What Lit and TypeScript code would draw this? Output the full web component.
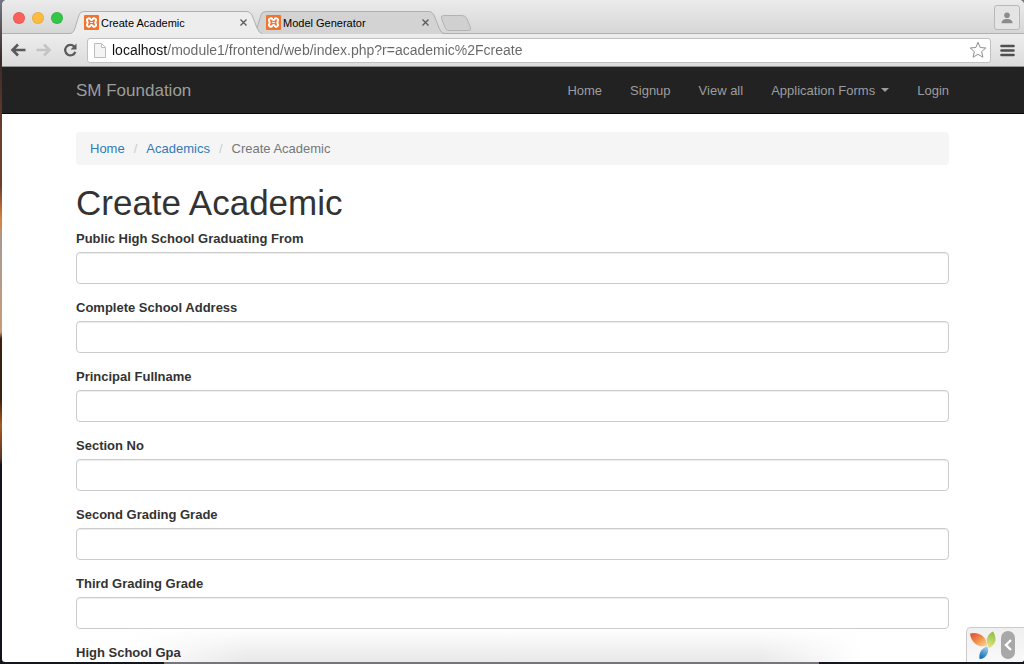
import { LitElement, html, css, svg } from "lit";
import { customElement, property } from "lit/decorators.js";

@customElement("browser-tab")
class BrowserTab extends LitElement {
  @property() label = "";
  @property({ type: Boolean, reflect: true }) active = false;

  static styles = css`
    :host {
      display: flex;
      position: relative;
      flex: 0 1 192px;
      min-width: 0;
      height: 23px;
      margin-right: -10px;
      font-family: "Liberation Sans", Arial, sans-serif;
    }
    :host([active]) {
      z-index: 1;
    }
    .shape {
      position: absolute;
      inset: 0;
      width: 100%;
      height: 100%;
    }
    .content {
      position: relative;
      display: flex;
      align-items: center;
      flex: 1;
      min-width: 0;
      padding: 0 13px 0 14px;
      gap: 2px;
    }
    .icon {
      flex: none;
      width: 15px;
      height: 15px;
    }
    button {
      border: 0;
      padding: 0;
      background: none;
      font: inherit;
    }
    .title {
      flex: 1;
      min-width: 0;
      font-size: 11px;
      line-height: 16px;
      text-align: left;
      color: #000;
      overflow: hidden;
      white-space: nowrap;
    }
    .close {
      display: flex;
      padding: 2px;
    }
    .close svg {
      width: 7px;
      height: 7px;
    }
  `;

  render() {
    const fill = this.active ? "#ededed" : "#d3d3d3";
    return html`
      <svg class="shape" viewBox="0 0 192 23" preserveAspectRatio="none" aria-hidden="true">
        <path d="M0 23 C3 22 4 20 5 17 L9 4 Q10 .5 14 .5 H177 Q180 .5 182 4 L187 17 Q189 22 192 23 Z" fill=${fill} />
        <path d="M0 22.5 C3 22 4 20 5 17 L9 4 Q10 .5 14 .5 H177 Q180 .5 182 4 L187 17 Q189 22 192 22.5" fill="none" stroke="#b0b0b0" />
      </svg>
      <div class="content">
        <svg class="icon" viewBox="0 0 15 15" aria-hidden="true">
          <rect width="15" height="15" rx="1" fill="#ee7430" />
          <path
            d="M4 3.5 Q5.5 2.5 6.4 4.4 Q7.5 5.5 8.6 4.4 Q9.5 2.5 11 3.5 Q12.8 4.5 11.6 6.4 Q11 7.5 11.6 8.6 Q12.8 10.5 11 11.5 Q9.5 12.5 8.6 10.6 Q7.5 9.5 6.4 10.6 Q5.5 12.5 4 11.5 Q2.2 10.5 3.4 8.6 Q4 7.5 3.4 6.4 Q2.2 4.5 4 3.5Z"
            fill="none"
            stroke="#fff"
            stroke-width="2"
          />
          <path d="M6.2 7.5 H8.8" stroke="#fff" stroke-width="1.2" />
        </svg>
        <button class="title" role="tab" aria-selected=${this.active}>${this.label}</button>
        <button class="close" aria-label="Close tab">
          <svg viewBox="0 0 7 7"><path d="M.5 .5 L6.5 6.5 M6.5 .5 L.5 6.5" stroke="#5c5c5c" stroke-width="1.4" /></svg>
        </button>
      </div>
    `;
  }
}

@customElement("browser-chrome")
class BrowserChrome extends LitElement {
  static styles = css`
    :host {
      display: block;
      font-family: "Liberation Sans", Arial, sans-serif;
    }
    button {
      border: 0;
      padding: 0;
      background: none;
      display: flex;
    }
    .strip {
      display: flex;
      align-items: flex-end;
      box-sizing: border-box;
      height: 34px;
      padding: 0 4px 0 11px;
      border-bottom: 1px solid #b0b0b0;
      background: linear-gradient(#ebebeb, #d6d6d6);
    }
    .lights {
      display: flex;
      align-self: flex-start;
      gap: 7px;
      padding: 12px 7px 0 0;
    }
    .light {
      box-sizing: border-box;
      width: 12px;
      height: 12px;
      border: 1px solid rgba(0, 0, 0, 0.08);
      border-radius: 50%;
    }
    .red {
      background: #fc605b;
    }
    .yellow {
      background: #fdbc40;
    }
    .green {
      background: #33c748;
    }
    .tabs {
      display: flex;
      flex: 1;
      min-width: 0;
      margin-bottom: -1px;
    }
    .new-tab {
      align-self: center;
      margin-left: 6px;
    }
    .new-tab svg {
      width: 32px;
      height: 16px;
    }
    .profile {
      align-self: flex-start;
      justify-content: center;
      align-items: center;
      box-sizing: border-box;
      width: 26px;
      height: 25px;
      margin-top: 5px;
      border: 1px solid #b8b8b8;
      border-radius: 3px;
      background: #e4e4e4;
    }
    .profile svg {
      width: 12px;
      height: 12px;
    }
    .toolbar {
      display: flex;
      align-items: center;
      box-sizing: border-box;
      height: 33px;
      padding: 0 9px 0 8px;
      border-bottom: 1px solid #8f9491;
      background: linear-gradient(#ededed, #dcdcdc);
    }
    .nav {
      display: flex;
      gap: 10px;
      padding-right: 9px;
    }
    .nav svg {
      width: 16px;
      height: 16px;
    }
    .address {
      display: flex;
      align-items: center;
      flex: 1;
      min-width: 0;
      box-sizing: border-box;
      height: 25px;
      padding: 0 3px 0 6px;
      gap: 6px;
      border: 1px solid #c0c0c0;
      border-radius: 3px;
      background: #fff;
    }
    .address svg {
      flex: none;
    }
    .url {
      flex: 1;
      min-width: 0;
      border: 0;
      padding: 0;
      outline: 0;
      font: 14px/18px "Liberation Sans", Arial, sans-serif;
      color: transparent;
      background: linear-gradient(90deg, #111 55px, #666 55px);
      -webkit-background-clip: text;
      background-clip: text;
    }
    .menu {
      margin-left: 9px;
    }
  `;

  render() {
    return html`
      <div class="strip">
        <div class="lights">
          <button class="light red" aria-label="Close window"></button>
          <button class="light yellow" aria-label="Minimize window"></button>
          <button class="light green" aria-label="Zoom window"></button>
        </div>
        <div class="tabs" role="tablist">
          <browser-tab label="Create Academic" active></browser-tab>
          <browser-tab label="Model Generator"></browser-tab>
          <button class="new-tab" aria-label="New tab">
            <svg viewBox="0 0 32 16">
              <path d="M3.5 .5 H22 Q25 .5 26.5 3 L30.5 12.5 Q31.5 15.5 28.5 15.5 H9 Q6.5 15.5 5.5 13.5 L1.5 3.5 Q.5 .5 3.5 .5Z" fill="#d0d0d0" stroke="#b2b2b2" />
            </svg>
          </button>
        </div>
        <button class="profile" aria-label="Profile">
          <svg viewBox="0 0 12 12" fill="#8c8c8c">
            <circle cx="6" cy="3.2" r="2.8" />
            <path d="M.5 11.2 C.5 8.2 3 7 6 7 S11.5 8.2 11.5 11.2Z" />
          </svg>
        </button>
      </div>
      <div class="toolbar">
        <div class="nav">
          <button aria-label="Back">
            <svg viewBox="0 0 16 16" fill="none" stroke="#5a5a5a" stroke-width="2.6"><path d="M15.5 8 H3 M8 2.5 L2.5 8 L8 13.5" /></svg>
          </button>
          <button aria-label="Forward">
            <svg viewBox="0 0 16 16" fill="none" stroke="#c4c4c4" stroke-width="2.6"><path d="M.5 8 H13 M8 2.5 L13.5 8 L8 13.5" /></svg>
          </button>
          <button aria-label="Reload">
            <svg viewBox="0 0 16 16"><path d="M12.3 4.7 A5.2 5.2 0 1 0 13.3 9.8" fill="none" stroke="#5a5a5a" stroke-width="2.3" /><path d="M14.5 1.5 V7.5 H8.5Z" fill="#5a5a5a" /></svg>
          </button>
        </div>
        <div class="address">
          <svg width="12" height="15" viewBox="0 0 12 15"><path d="M.5 .5 H7.5 L11.5 4.5 V14.5 H.5Z M7.5 .5 V4.5 H11.5" fill="#f4f4f4" stroke="#bdbdbd" /></svg>
          <input class="url" type="text" aria-label="Address" value="localhost/module1/frontend/web/index.php?r=academic%2Fcreate" />
          <button aria-label="Bookmark this page">
            <svg width="18" height="18" viewBox="0 0 18 18"><path d="M9 1.3 L11.2 6.5 L16.8 7 L12.6 10.7 L13.9 16.2 L9 13.3 L4.1 16.2 L5.4 10.7 L1.2 7 L6.8 6.5Z" fill="#fff" stroke="#8d8d8d" stroke-linejoin="round" /></svg>
          </button>
        </div>
        <button class="menu" aria-label="Menu">
          <svg width="15" height="13" viewBox="0 0 15 13"><path d="M1.5 2 H13.5 M1.5 6.5 H13.5 M1.5 11 H13.5" stroke="#4f4f4f" stroke-width="2.6" stroke-linecap="round" /></svg>
        </button>
      </div>
    `;
  }
}

const FIELDS = [
  "Public High School Graduating From",
  "Complete School Address",
  "Principal Fullname",
  "Section No",
  "Second Grading Grade",
  "Third Grading Grade",
  "High School Gpa",
];

@customElement("app-root")
class AppRoot extends LitElement {
  static styles = css`
    :host {
      display: flex;
      flex-direction: column;
      box-sizing: border-box;
      height: 100vh;
      padding: 0 0 2px 2px;
      overflow: hidden;
      font: 13px/19px "Liberation Sans", Arial, sans-serif;
      color: #333;
      background:
        linear-gradient(90deg, #14161d 16%, #77747b 16%, #77747b 80%, #14161d 80%) left bottom / 100% 2px no-repeat,
        linear-gradient(#777783 0%, #3a2a2a 9%, #6b3f2d 20%, #6b3f2d 28%, #d9833c 33%, #a89a90 36%, #c79a78 50%, #3b200f 51%, #3b200f 60%, #a85c20 64%, #5a3524 69%, #10131c 70%);
    }
    .window {
      position: relative;
      display: flex;
      flex-direction: column;
      flex: 1;
      min-height: 0;
      overflow: hidden;
      border-radius: 5px 5px 3px 3px;
      background:
        linear-gradient(90deg, #fff 12%, transparent 24%, transparent 74%, #fff 84%) left bottom / 100% 36px no-repeat,
        linear-gradient(#fff, #e8e8e8) left bottom / 100% 34px no-repeat,
        #fff;
    }
    .navbar {
      flex: none;
      background: #222;
      border-bottom: 1px solid #080808;
    }
    .container {
      padding: 0 75px 0 74px;
    }
    .bar {
      display: flex;
      justify-content: space-between;
      align-items: center;
      height: 46px;
    }
    a {
      text-decoration: none;
    }
    .brand {
      font-size: 17px;
      color: #9d9d9d;
    }
    .links {
      display: flex;
      gap: 28px;
      margin: 0;
      padding: 0;
      list-style: none;
    }
    .links a {
      display: flex;
      align-items: center;
      gap: 6px;
      color: #9d9d9d;
    }
    .caret {
      border: 4px solid transparent;
      border-top-color: #9d9d9d;
      border-bottom: 0;
    }
    .breadcrumb {
      display: flex;
      margin: 18px 0 20px;
      padding: 7px 14px;
      list-style: none;
      border-radius: 4px;
      background: #f5f5f5;
      color: #777;
    }
    .breadcrumb a {
      color: #337ab7;
    }
    .breadcrumb li + li::before {
      content: "/";
      padding: 0 9px;
      color: #ccc;
    }
    h1 {
      margin: 0 0 8px;
      font-size: 35px;
      line-height: 36px;
      font-weight: 500;
    }
    .field {
      display: flex;
      flex-direction: column;
      gap: 4px;
      margin-bottom: 14px;
    }
    label {
      font-weight: 700;
    }
    .control {
      box-sizing: border-box;
      width: 100%;
      height: 32px;
      padding: 6px 11px;
      border: 1px solid #ccc;
      border-radius: 4px;
      background: #fff;
      box-shadow: inset 0 1px 1px rgba(0, 0, 0, 0.075);
      font: inherit;
      color: #555;
    }
    .debug {
      position: absolute;
      right: 0;
      bottom: 0;
      display: flex;
      align-items: center;
      box-sizing: border-box;
      height: 35px;
      padding: 0 9px 0 3px;
      gap: 5px;
      border: 1px solid #ccc;
      border-width: 1px 0 0 1px;
      border-radius: 5px 0 0 0;
      background: linear-gradient(#efefef, #f9f9f9);
    }
    .debug a,
    .debug button {
      display: flex;
    }
    .toggle {
      justify-content: center;
      align-items: center;
      width: 14px;
      height: 28px;
      border: 0;
      border-radius: 7px;
      padding: 0;
      background: #a8a8a8;
    }
  `;

  render() {
    return html`
      <div class="window">
        <browser-chrome></browser-chrome>
        <nav class="navbar">
          <div class="container bar">
            <a class="brand" href="#">SM Foundation</a>
            <ul class="links">
              <li><a href="#">Home</a></li>
              <li><a href="#">Signup</a></li>
              <li><a href="#">View all</a></li>
              <li><a href="#">Application Forms <span class="caret"></span></a></li>
              <li><a href="#">Login</a></li>
            </ul>
          </div>
        </nav>
        <main class="container">
          <ul class="breadcrumb">
            <li><a href="#">Home</a></li>
            <li><a href="#">Academics</a></li>
            <li>Create Academic</li>
          </ul>
          <h1>Create Academic</h1>
          <form>
            ${FIELDS.map(
              (name, i) => html`
                <div class="field">
                  <label for="field-${i}">${name}</label>
                  <input class="control" type="text" id="field-${i}" />
                </div>
              `
            )}
          </form>
        </main>
        <div class="debug">
          <a href="#" aria-label="Yii debugger">${this.logo()}</a>
          <button class="toggle" aria-label="Toggle debug toolbar">
            <svg width="8" height="12" viewBox="0 0 8 12"><path d="M7 1 L2 6 L7 11" fill="none" stroke="#fff" stroke-width="2.4" /></svg>
          </button>
        </div>
      </div>
    `;
  }

  private logo() {
    return svg`
      <svg width="26" height="29" viewBox="0 0 26 29">
        <defs>
          <linearGradient id="warm" x1="0" y1="0" x2="1" y2="1">
            <stop offset="0" stop-color="#dc4a35" />
            <stop offset=".5" stop-color="#f08c4a" />
            <stop offset="1" stop-color="#fbdc8c" />
          </linearGradient>
          <linearGradient id="leaf" x1=".6" y1="0" x2=".4" y2="1">
            <stop offset="0" stop-color="#8fbd42" />
            <stop offset="1" stop-color="#e2e682" />
          </linearGradient>
          <linearGradient id="cool" x1=".7" y1="0" x2=".3" y2="1">
            <stop offset="0" stop-color="#9fd0ee" />
            <stop offset="1" stop-color="#0f69b4" />
          </linearGradient>
        </defs>
        <path d="M0 2.5 C7 .5 16.5 4 17 14.5 C10 17.5 1 12.5 0 2.5Z" fill="url(#warm)" />
        <path d="M23 .5 C26.5 6 27.5 13 18.8 17.2 C18.5 14.8 16.8 12.8 16.7 10 C16.7 6 19.5 2 23 .5Z" fill="url(#leaf)" />
        <path d="M17.2 15.2 C20 20 16.5 28 9.5 28 C8.7 22 11 17.5 17.2 15.2Z" fill="url(#cool)" />
      </svg>
    `;
  }
}
